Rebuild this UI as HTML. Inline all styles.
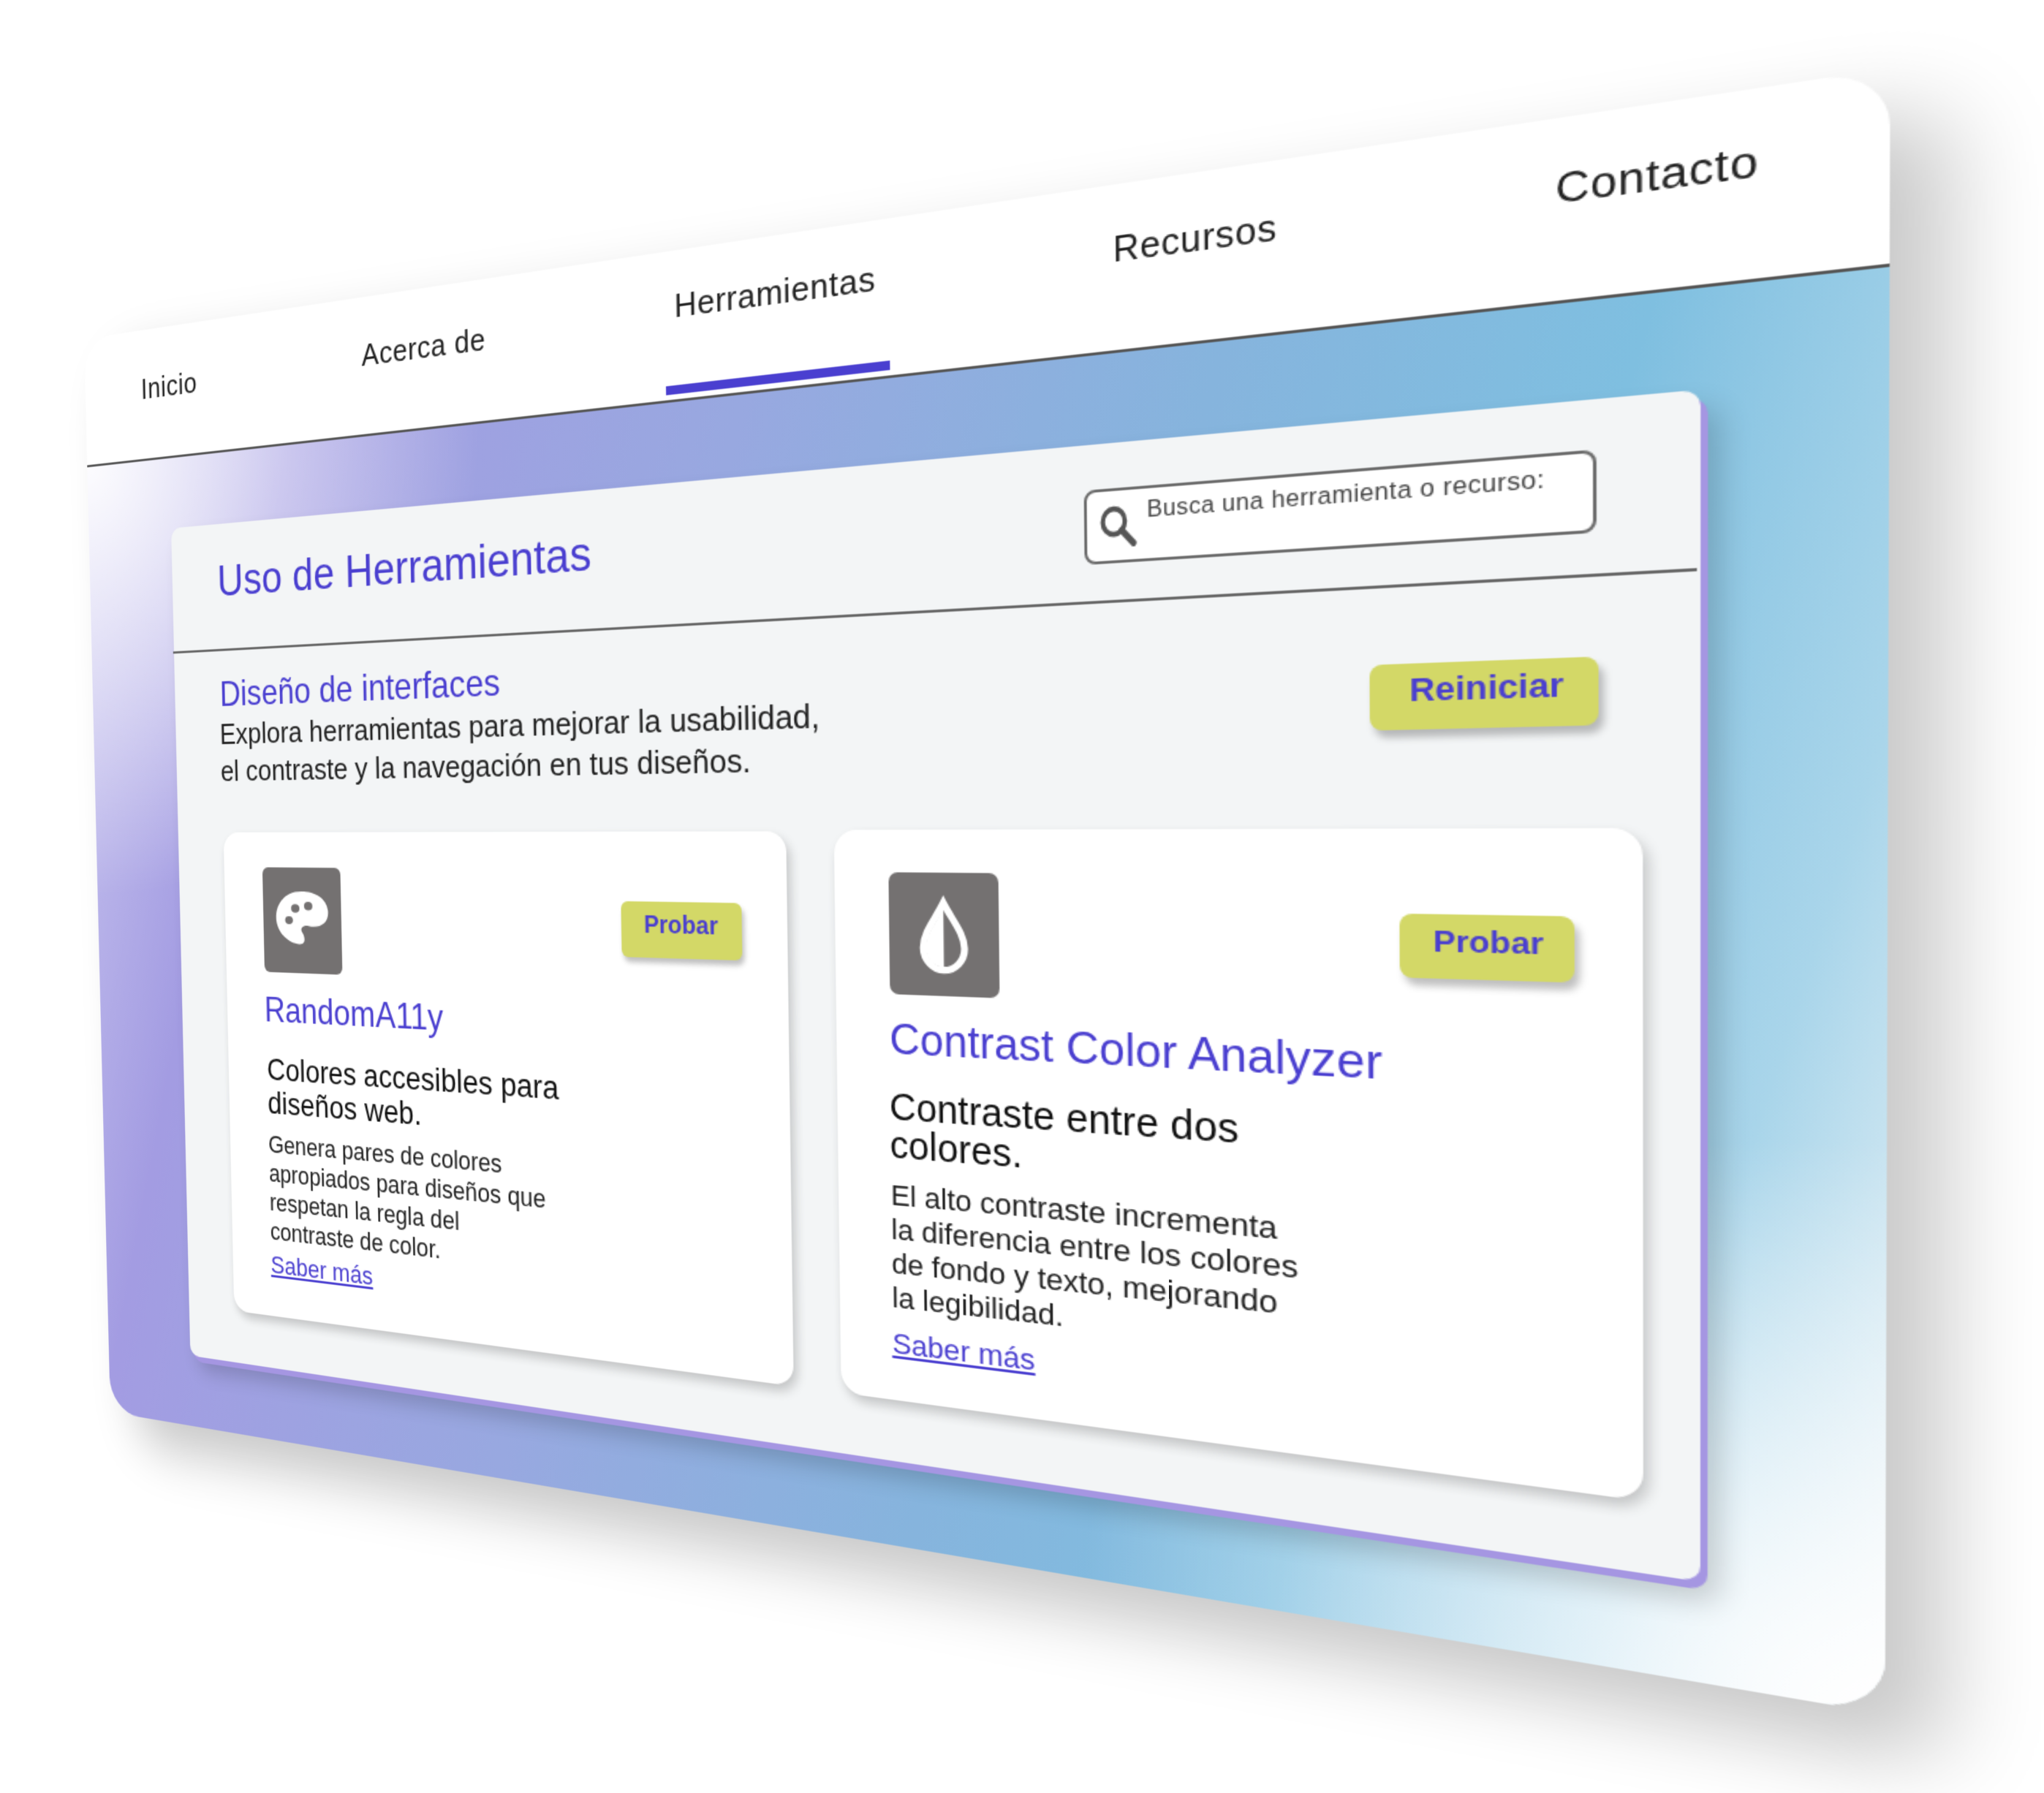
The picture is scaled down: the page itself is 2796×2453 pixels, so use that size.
<!DOCTYPE html>
<html><head><meta charset="utf-8">
<style>
html,body{margin:0;padding:0;background:#fff;}
body{width:2796px;height:2453px;overflow:hidden;position:relative;font-family:"Liberation Sans",sans-serif;}
#frame{position:absolute;left:0;top:0;width:1400px;height:1000px;transform-origin:0 0;border-radius:34px;
background:#fff;box-shadow:30px 26px 50px rgba(0,0,0,.22);overflow:hidden;}
#grad{position:absolute;left:0;right:0;bottom:0;top:117px;
background:
radial-gradient(ellipse 30% 45% at 0% 0%, rgba(255,255,255,.95), rgba(255,255,255,0)),
radial-gradient(ellipse 35% 40% at 100% 100%, rgba(255,255,255,1), rgba(255,255,255,0)),
linear-gradient(105deg,#c9c5ef 0%,#a39ce2 14%,#98a8e0 40%,#86b4dd 62%,#7fbfe0 78%,#a9d5ea 90%,#eef5f8 100%);}
#navline{position:absolute;left:0;right:0;top:116px;height:2px;background:#555;}
.box{position:absolute;}
.t{position:absolute;white-space:nowrap;line-height:1.2;}
</style></head><body>
<div id="frame">
  <div id="grad"></div>
  <div id="navline"></div>
</div>
<script>
const S=1.797,W=1400,H=1000;
const q=[[64,258],[1439,52],[1435,1305],[84,1075]].map(p=>[p[0]*S,p[1]*S]);
const [x0,y0]=q[0],[x1,y1]=q[1],[x2,y2]=q[2],[x3,y3]=q[3];
const dx1=x1-x2,dx2=x3-x2,dx3=x0-x1+x2-x3,dy1=y1-y2,dy2=y3-y2,dy3=y0-y1+y2-y3;
const den=dx1*dy2-dx2*dy1;
const g=(dx3*dy2-dx2*dy3)/den,h=(dx1*dy3-dx3*dy1)/den;
const a=x1-x0+g*x1,b=x3-x0+h*x3,c=x0,d=y1-y0+g*y1,e=y3-y0+h*y3,f=y0;
function fwd(x,y){const u=x/W,v=y/H,w=g*u+h*v+1;return[(a*u+b*v+c)/w,(d*u+e*v+f)/w];}
function inv(X,Y){X*=S;Y*=S;
 const A1=a-g*X,B1=b-h*X,C1=X-c,A2=d-g*Y,B2=e-h*Y,C2=Y-f;
 const dt=A1*B2-B1*A2;return[(C1*B2-B1*C2)/dt*W,(A1*C2-A2*C1)/dt*H];}
function sc(x,y){const p=fwd(x,y),p2=fwd(x,y+1);return Math.hypot(p2[0]-p[0],p2[1]-p[1]);}
const fr=document.getElementById('frame');
fr.style.transform=`matrix3d(${a/W},${d/W},0,${g/W},${b/H},${e/H},0,${h/H},0,0,1,0,${c},${f},0,1)`;
function box(x1,y1,x2,y2,css,html){const p=inv(x1,y1),r=inv(x2,y2);const el=document.createElement('div');el.className='box';
 el.style.cssText=`left:${p[0]}px;top:${p[1]}px;width:${r[0]-p[0]}px;height:${r[1]-p[1]}px;`+css;el.innerHTML=html||'';fr.appendChild(el);return el;}
function txt(x,y,size,css,html){const p0=inv(x,y);const fs=size*S/sc(p0[0],p0[1]);const p=inv(x,y-0.2*size);
 const el=document.createElement('div');el.className='t';el.style.cssText=`left:${p[0]}px;top:${p[1]}px;font-size:${fs}px;`+css;el.innerHTML=html;fr.appendChild(el);return el;}
const nav="color:#222;font-family:'Liberation Sans',sans-serif;letter-spacing:.5px;";
txt(107,288,22,nav,"Inicio");
txt(275,262,23.5,nav,"Acerca de");
txt(513,223,26,nav,"Herramientas");
txt(847,180,27.5,nav,"Recursos");
txt(1184,132,32.5,nav,"Contacto");
box(507,294,678,288,"background:#4a3fd0;height:7px;");
// panel
box(130,402,1295,1205,"background:#f3f5f6;border-radius:10px;box-shadow:4px 5px 0 #a596e2,10px 12px 18px rgba(0,0,0,.18);");
box(132,496,1292,433,"background:#666;height:2px;");
// search
box(825,374,1216,405,"border:2px solid #6b6b6b;border-radius:8px;background:#fff;box-sizing:border-box;");
box(836,384,866,416,"",'<svg viewBox="0 0 30 30" width="100%" height="100%" preserveAspectRatio="none"><circle cx="12" cy="12" r="8.5" fill="none" stroke="#555" stroke-width="3.5"/><path d="M18 18L27 27" stroke="#555" stroke-width="4.5" stroke-linecap="round"/></svg>');
txt(873,382,17.5,"color:#444;letter-spacing:.3px;","Busca una herramienta o recurso:");
const narrow="font-family:'Liberation Sans Narrow','Liberation Sans',sans-serif;";
txt(165,430,34,narrow+"color:#4a3fd0;","Uso de Herramientas");
box(1043,506,1217,552,"background:#d3d867;border-radius:8px;box-shadow:3px 5px 5px rgba(0,0,0,.25);");
txt(1073,516,25,"color:#4a3fd0;font-weight:bold;","Reiniciar");
txt(167,518,27,narrow+"color:#4a3fd0;","Diseño de interfaces");
txt(167,550,22.5,narrow+"color:#222;line-height:1.25;","Explora herramientas para mejorar la usabilidad,<br>el contraste y la navegación en tus diseños.");
// card1
box(170,634,604,1055,"background:#fff;border-radius:16px;box-shadow:3px 5px 8px rgba(0,0,0,.2);");
box(200,660,261,742,"background:#747171;border-radius:6px;",'<svg viewBox="0 0 60 80" width="100%" height="100%" preserveAspectRatio="none"><path d="M30 18C17 18 10 28 10 38C10 50 20 58 28 58C33 58 32 52 30 49C28 46 31 43 35 44C44 46 51 41 50 32C49 23 41 18 30 18Z" fill="#fff"/><circle cx="25" cy="31" r="3.2" fill="#747171"/><circle cx="35" cy="29" r="3.2" fill="#747171"/><circle cx="20" cy="40" r="3" fill="#747171"/></svg>');
box(473,686,565,731,"background:#d3d867;border-radius:6px;box-shadow:2px 4px 4px rgba(0,0,0,.25);");
txt(490,697,19,narrow+"color:#4a3fd0;font-weight:bold;","Probar");
txt(201,758,26.5,narrow+"color:#4a3fd0;","RandomA11y");
txt(203,806,23.5,narrow+"color:#111;line-height:1.08;","Colores accesibles para<br>diseños web.");
txt(204,864,18.5,narrow+"color:#222;line-height:1.2;","Genera pares de colores<br>apropiados para diseños que<br>respetan la regla del<br>contraste de color.");
txt(206,956,19,narrow+"color:#4a3fd0;text-decoration:underline;","Saber más");
// card2
box(635,632,1251,1143,"background:#fff;border-radius:18px;box-shadow:3px 5px 8px rgba(0,0,0,.2);");
box(676,664,761,760,"background:#747171;border-radius:7px;",'<svg viewBox="0 0 80 90" width="100%" height="100%" preserveAspectRatio="none"><path d="M40 22C34 34 25 44 25 55C25 64 32 71 40 71C48 71 55 64 55 55C55 44 46 34 40 22Z" fill="none" stroke="#fff" stroke-width="5"/><path d="M40 26C35 36 27 45 27 55C27 63 33 69 40 69Z" fill="#fff"/></svg>');
box(1065,696,1199,748,"background:#d3d867;border-radius:8px;box-shadow:3px 5px 5px rgba(0,0,0,.25);");
txt(1091,709,23.5,"color:#4a3fd0;font-weight:bold;","Probar");
txt(677,778,33,"color:#4a3fd0;","Contrast Color Analyzer");
txt(677,835,29,"color:#111;line-height:1.0;","Contraste entre dos<br>colores.");
txt(678,902,22.5,"color:#222;line-height:1.15;","El alto contraste incrementa<br>la diferencia entre los colores<br>de fondo y texto, mejorando<br>la legibilidad.");
txt(679,1013,22.5,"color:#4a3fd0;text-decoration:underline;","Saber más");
</script>
</body></html>
